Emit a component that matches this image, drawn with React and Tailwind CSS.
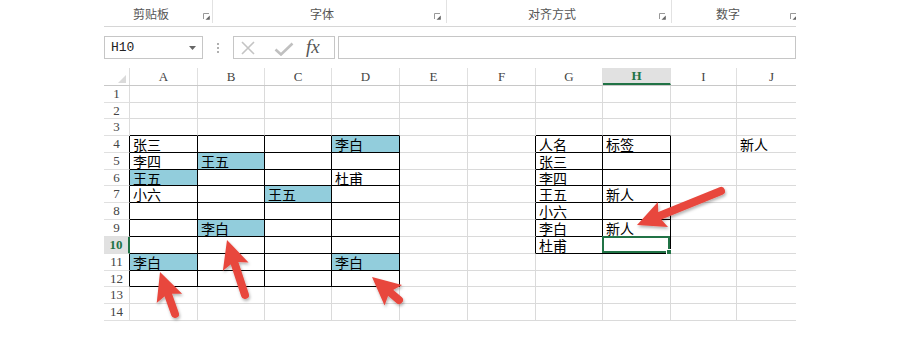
import React from 'react'

const CJK = { fontFamily: '"Noto Sans CJK SC", "Noto Sans", sans-serif' }

const COLS = [
  { n: 'A', w: 68 }, { n: 'B', w: 67 }, { n: 'C', w: 67 }, { n: 'D', w: 68 },
  { n: 'E', w: 68 }, { n: 'F', w: 68 }, { n: 'G', w: 67 }, { n: 'H', w: 68 },
  { n: 'I', w: 66 }, { n: 'J', w: 70 },
]
const ROW_H = [17, 16, 17, 17, 17, 16, 17, 17, 17, 17, 17, 16, 17, 17]

const DATA = {
  A4: '张三', D4: '李白', A5: '李四', B5: '王五', A6: '王五', D6: '杜甫',
  A7: '小六', C7: '王五', B9: '李白', A11: '李白', D11: '李白',
  G4: '人名', H4: '标签', J4: '新人', G5: '张三', G6: '李四', G7: '王五',
  H7: '新人', G8: '小六', G9: '李白', H9: '新人', G10: '杜甫',
}
const FILLED = ['A6', 'B5', 'C7', 'D4', 'B9', 'A11', 'D11']

const inTable = (c, r) =>
  (c >= 0 && c <= 3 && r >= 4 && r <= 12) || (c >= 6 && c <= 7 && r >= 4 && r <= 10)

const ARROWS = [
  { tip: [160, 272], tail: [175, 314] },
  { tip: [227, 240], tail: [245, 295] },
  { tip: [372, 277], tail: [399, 300] },
  { tip: [637, 225], tail: [721, 191] },
]

function Launcher() {
  return (
    <svg width="7" height="7" viewBox="0 0 7 7" className="shrink-0 mt-[9px]">
      <path d="M0.5 6V0.5H6" fill="none" stroke="#999" />
      <polygon points="2.5,6.8 6.8,6.8 6.8,2.5" fill="#666" />
    </svg>
  )
}

function Ribbon() {
  const groups = [
    { label: '剪贴板', w: 'w-[109px]', pl: 'pl-[29px]', pr: 'pr-[2px]' },
    { label: '字体', w: 'w-[234px]', pl: 'pl-[97px]', pr: 'pr-[5px]' },
    { label: '对齐方式', w: 'w-[225px]', pl: 'pl-[81px]', pr: 'pr-[5px]' },
    { label: '数字', w: 'w-[128px]', pl: 'pl-[44px]', pr: 'pr-[3px]' },
  ]
  return (
    <div className="flex h-[27px] border-b border-[#d6d6d6]" style={CJK}>
      {groups.map((g, i) => (
        <div key={i} className={`flex shrink-0 items-center h-[23px] ${g.w} ${g.pl} ${g.pr} ${i < 3 ? 'border-r border-[#e2e2e2]' : ''}`}>
          <span className="text-[12px] text-[#555] leading-none mt-[4px]">{g.label}</span>
          <span className="ml-auto flex"><Launcher /></span>
        </div>
      ))}
    </div>
  )
}

function FormulaBar() {
  return (
    <div className="flex h-[23px] mt-[9px]">
      <div className="w-[99px] shrink-0 border border-[#c6c6c6] flex items-center pl-[6px] pr-[6px]">
        <span className="text-[13px] text-[#222]" style={{ fontFamily: '"Liberation Mono", monospace' }}>H10</span>
        <svg width="7" height="4" viewBox="0 0 7 4" className="ml-auto">
          <polygon points="0,0 7,0 3.5,4" fill="#666" />
        </svg>
      </div>
      <div className="w-[30px] shrink-0 flex flex-col items-center justify-center gap-[2px]">
        <span className="w-[2px] h-[2px] bg-[#b0b0b0]" />
        <span className="w-[2px] h-[2px] bg-[#b0b0b0]" />
        <span className="w-[2px] h-[2px] bg-[#b0b0b0]" />
      </div>
      <div className="w-[102px] shrink-0 border border-[#c6c6c6] flex items-center">
        <svg width="16" height="16" viewBox="0 0 16 16" className="ml-[6px]">
          <path d="M2 2L14 14M14 2L2 14" stroke="#c4c4c4" strokeWidth="1.6" />
        </svg>
        <svg width="20" height="14" viewBox="0 0 20 14" className="ml-[18px] mt-[3px]">
          <path d="M1.5 7.5L7 12.5L18.5 1.5" fill="none" stroke="#c0c0c0" strokeWidth="2.6" />
        </svg>
        <span className="ml-[12px] text-[19px] italic text-[#555] leading-none mb-[2px]" style={{ fontFamily: '"Liberation Serif", serif' }}>fx</span>
      </div>
      <div className="ml-[3px] flex-1 border border-[#c6c6c6]" />
    </div>
  )
}

function Grid() {
  const serif = { fontFamily: '"Liberation Serif", "DejaVu Serif", serif' }
  return (
    <div className="mt-[9px]">
      <div className="flex h-[18px] border-b border-[#c8c8c8]" style={serif}>
        <div className="w-[26px] shrink-0 border-r border-[#dcdcdc] flex items-end justify-end pr-[3px] pb-[2px]">
          <svg width="8" height="8" viewBox="0 0 8 8"><polygon points="8,0 8,8 0,8" fill="#dadada" /></svg>
        </div>
        {COLS.map((c) => (
          <div
            key={c.n}
            style={{ width: c.w }}
            className={`shrink-0 flex items-center justify-center text-[13px] border-r border-[#e0e0e0] ${c.n === 'H' ? 'bg-[#e1e1e1] text-[#217346] font-bold border-b-2 border-b-[#217346]' : 'text-[#444]'}`}
          >
            {c.n}
          </div>
        ))}
      </div>
      {ROW_H.map((h, i) => {
        const r = i + 1
        const hdrBorder = r === 10 ? 'border-r-2 border-r-[#217346]' : inTable(0, r) ? 'border-r border-r-black' : 'border-r border-r-[#dcdcdc]'
        return (
          <div key={r} className="flex" style={{ height: h }}>
            <div
              style={serif}
              className={`w-[26px] shrink-0 flex items-center justify-center border-b border-b-[#e0e0e0] text-[13px] ${hdrBorder} ${r === 10 ? 'bg-[#e1e1e1] text-[#217346] font-bold' : 'text-[#444]'}`}
            >
              {r}
            </div>
            {COLS.map((c, ci) => {
              const key = c.n + r
              const rb = inTable(ci, r) || inTable(ci + 1, r) ? 'border-r-black' : 'border-r-[#dadada]'
              const bb = inTable(ci, r) || inTable(ci, r + 1) ? 'border-b-black' : 'border-b-[#dadada]'
              const fill = FILLED.includes(key) ? 'bg-[#92cddc]' : ''
              const selected = key === 'H10'
              return (
                <div
                  key={key}
                  style={{ width: c.w, ...CJK }}
                  className={`relative shrink-0 flex items-center pl-[3px] border-r border-b ${rb} ${bb} ${fill} text-[14px] leading-none text-black`}
                >
                  {DATA[key]}
                  {selected && (
                    <div className="absolute -left-[1px] -top-[1px] right-0 bottom-0 border-2 border-[#217346]">
                      <span className="absolute -right-[4px] -bottom-[4px] w-[6px] h-[6px] bg-[#217346] border border-white" />
                    </div>
                  )}
                </div>
              )
            })}
          </div>
        )
      })}
    </div>
  )
}

function arrowParts({ tip, tail }) {
  const head = 26
  const half = 13.5
  const dx = tip[0] - tail[0]
  const dy = tip[1] - tail[1]
  const L = Math.hypot(dx, dy)
  const ux = dx / L
  const uy = dy / L
  const nx = -uy
  const ny = ux
  const bx = tip[0] - ux * head
  const by = tip[1] - uy * head
  const pts = [
    [tip[0], tip[1]],
    [bx + nx * half - ux * 2, by + ny * half - uy * 2],
    [bx + ux * 3, by + uy * 3],
    [bx - nx * half - ux * 2, by - ny * half - uy * 2],
  ]
  return {
    head: pts.map((p) => p.join(',')).join(' '),
    shaft: { x1: tail[0], y1: tail[1], x2: bx + ux * 4, y2: by + uy * 4 },
  }
}

function Arrows() {
  return (
    <svg className="absolute inset-0 pointer-events-none" width="900" height="337" viewBox="0 0 900 337">
      <defs>
        <filter id="arrowShadow" x="-20%" y="-20%" width="140%" height="140%">
          <feDropShadow dx="1" dy="2" stdDeviation="1.6" floodColor="#000" floodOpacity="0.3" />
        </filter>
      </defs>
      {ARROWS.map((a, i) => {
        const p = arrowParts(a)
        return (
          <g key={i} filter="url(#arrowShadow)">
            <line {...p.shaft} stroke="#e8473d" strokeWidth="8" strokeLinecap="round" />
            <polygon points={p.head} fill="#e8473d" />
          </g>
        )
      })}
    </svg>
  )
}

export default function App() {
  return (
    <div className="relative w-[900px] h-[337px] bg-white overflow-hidden">
      <div className="ml-[104px] w-[692px] overflow-hidden">
        <Ribbon />
        <FormulaBar />
        <Grid />
      </div>
      <Arrows />
    </div>
  )
}
